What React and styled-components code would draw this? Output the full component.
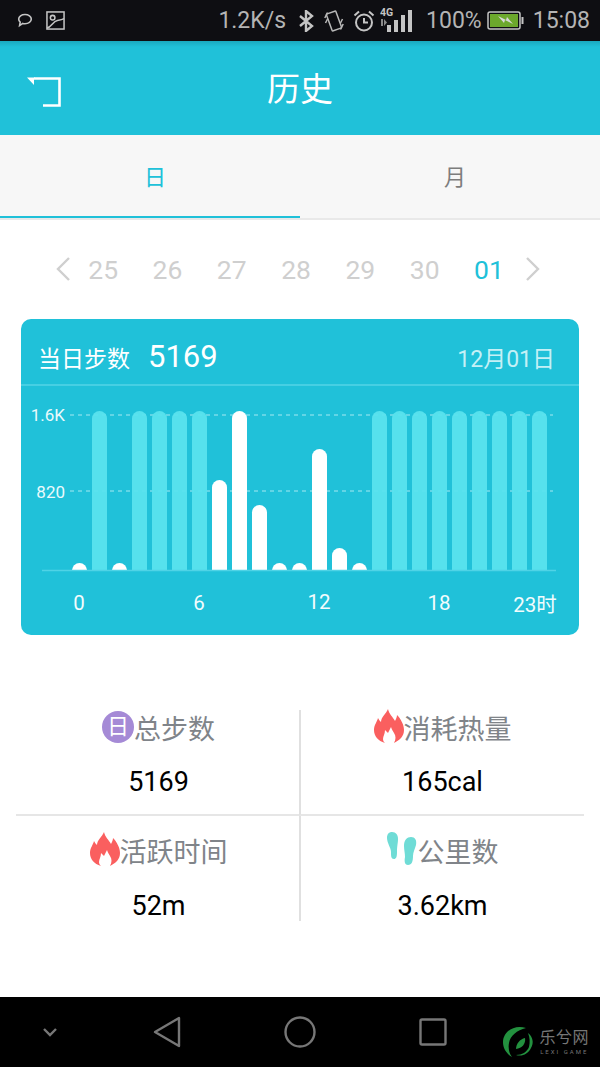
import React from 'react';
import styled, { createGlobalStyle } from 'styled-components';

const GlobalStyle = createGlobalStyle`
  html, body { margin: 0; padding: 0; background: #fff; }
  body { font-family: Roboto, "Noto Sans CJK SC", sans-serif; }
`;

const Page = styled.div`
  width: 600px;
  height: 1067px;
  display: flex;
  flex-direction: column;
  background: #fff;
  overflow: hidden;
  font-family: Roboto, "Noto Sans CJK SC", sans-serif;
`;

const StatusBar = styled.div`
  height: 41px;
  flex: none;
  background: #0e0e12;
  display: flex;
  align-items: center;
  justify-content: space-between;
  padding: 0 10px 0 17px;
  color: #b4b4b4;
  font-size: 23px;
`;

const StatusGroup = styled.div`
  display: flex;
  align-items: center;
  gap: ${p => p.$gap || 0}px;
`;

const StatusText = styled.span`
  margin-left: ${p => p.$left || 0}px;
  line-height: 41px;
`;

const StatusIcon = styled.svg`
  flex: none;
  margin-left: ${p => p.$left || 0}px;
  margin-top: ${p => p.$top || 0}px;
`;

const Header = styled.div`
  height: 94px;
  box-sizing: border-box;
  padding-top: 4px;
  flex: none;
  display: flex;
  align-items: center;
  justify-content: center;
  position: relative;
  background: linear-gradient(#1aa9bf 0, #20c1d9 6px);
`;

const BackButton = styled.svg`
  position: absolute;
  left: 26px;
  top: 35px;
`;

const Title = styled.div`
  font-size: 33px;
  color: #fff;
  line-height: 90px;
`;

const Tabs = styled.div`
  height: 83px;
  flex: none;
  display: flex;
  background: #f7f7f7;
  border-bottom: 2px solid #e9e9e9;
`;

const Tab = styled.div`
  flex: 1;
  display: flex;
  align-items: center;
  justify-content: center;
  padding: 0 0 4px 10px;
  font-size: 22px;
  color: ${p => (p.$active ? '#20c1d9' : '#7d7d7d')};
  box-shadow: ${p => (p.$active ? 'inset 0 -2px 0 #20c1d9' : 'none')};
`;

const DateRow = styled.div`
  height: 99px;
  flex: none;
  display: flex;
  align-items: center;
  padding-left: 55px;
`;

const Chevron = styled.svg`
  flex: none;
  margin-left: ${p => p.$left || 0}px;
  margin-top: -2px;
`;

const DateCell = styled.div`
  width: 64.3px;
  text-align: center;
  font-size: 26.5px;
  color: ${p => (p.$active ? '#20c1d9' : '#cfcfcf')};
`;

const Card = styled.div`
  margin: 0 21px;
  height: 316px;
  flex: none;
  border-radius: 10px;
  background: #20c1d9;
  overflow: hidden;
`;

const CardHeader = styled.div`
  height: 67px;
  box-sizing: border-box;
  border-bottom: 2px solid #46cfe3;
  display: flex;
  align-items: center;
  padding: 0 24px 0 17px;
  color: #fff;
`;

const CardLabel = styled.span`
  font-size: 23px;
  margin-top: 10px;
`;

const CardTotal = styled.span`
  font-size: 31px;
  margin-left: 18px;
  margin-top: 9px;
`;

const CardDate = styled.span`
  margin-left: auto;
  margin-top: 10px;
  font-size: 23px;
  color: #c4f0f6;
`;

const Plot = styled.svg`
  display: block;
`;

const Stats = styled.div`
  margin: 75px 16px 0;
  display: grid;
  grid-template-columns: 283px 285px;
  grid-template-rows: 106px 105px;
`;

const StatCell = styled.div`
  display: flex;
  flex-direction: column;
  align-items: center;
  box-sizing: border-box;
  padding-left: ${p => (p.$right ? 0 : 2)}px;
  border-left: ${p => (p.$right ? '2px solid #e0e0e0' : 'none')};
  border-bottom: ${p => (p.$top ? '2px solid #e6e6e6' : 'none')};
`;

const StatTitle = styled.div`
  display: flex;
  align-items: center;
  height: ${p => (p.$top ? 34 : 40)}px;
  margin-top: ${p => (p.$top ? 0 : 15)}px;
  font-size: 27px;
  color: #808489;
`;

const StatValue = styled.div`
  font-size: 27px;
  color: #000;
  margin-top: ${p => (p.$top ? 21 : 19)}px;
  line-height: 34px;
`;

const DayBadge = styled.span`
  width: 32px;
  height: 32px;
  flex: none;
  border-radius: 50%;
  background: #a58ad6;
  color: #fff;
  font-size: 22px;
  line-height: 32px;
  text-align: center;
`;

const TitleIcon = styled.svg`
  flex: none;
  margin-top: -3px;
`;

const NavBar = styled.div`
  margin-top: auto;
  height: 70px;
  flex: none;
  background: #000;
  position: relative;
  display: flex;
  align-items: center;
  padding-left: 42px;
`;

const NavIcon = styled.svg`
  flex: none;
  margin-left: ${p => p.$left}px;
`;

const Watermark = styled.div`
  position: absolute;
  right: 11px;
  bottom: 9px;
  display: flex;
  align-items: center;
  gap: 5px;
`;

const WatermarkText = styled.div`
  display: flex;
  flex-direction: column;
  align-items: center;
  color: #767676;
`;

const WatermarkName = styled.span`
  font-size: 16px;
  line-height: 20px;
  letter-spacing: 0.5px;
`;

const WatermarkSub = styled.span`
  font-size: 6px;
  line-height: 8px;
  letter-spacing: 2px;
`;

const Flame = () => (
  <TitleIcon width="30" height="34" viewBox="0 0 30 34">
    <path
      fill="#fa5f5f"
      d="M14 0C15 5 19 8 21 12C22 10 23 8 23 6C27 10 30 16 30 21C30 27 26 31 20 34C22 30 22 27 20 24C19 22 18 21 17 18C16 20 15 22 14 24C13 23 12 22 11 21C11 25 9 27 9 30C9 32 10 33 11 34C4 32 0 27 0 21C0 16 3 13 4 9C5 11 6 12 7 13C7 8 12 5 14 0Z"
    />
  </TitleIcon>
);

const Feet = () => (
  <TitleIcon width="31" height="34" viewBox="0 0 31 34">
    <path fill="#6fdcd6" d="M5 0C9 0 11 3 11 7C11 11 10 14 10 20C10 25 9 27 7 27C4 27 4 24 4 20C4 16 0 11 0 6C0 2 2 0 5 0Z" />
    <path fill="#6fdcd6" d="M24 5C28 5 30 8 29 13C28 17 26 20 26 24C26 29 25 33 21 33C18 33 17 30 18 25C18 21 17 18 17 14C17 8 20 5 24 5Z" />
  </TitleIcon>
);

const hours = [
  { top: 563 }, { top: 411, full: true }, { top: 563 }, { top: 411, full: true },
  { top: 411, full: true }, { top: 411, full: true }, { top: 411, full: true }, { top: 480 },
  { top: 411 }, { top: 505 }, { top: 563 }, { top: 563 },
  { top: 449 }, { top: 548 }, { top: 563 }, { top: 411, full: true },
  { top: 411, full: true }, { top: 411, full: true }, { top: 411, full: true }, { top: 411, full: true },
  { top: 411, full: true }, { top: 411, full: true }, { top: 411, full: true }, { top: 411, full: true },
];

// plot coordinates start at the card's left edge and just under its header
const PLOT_X = 21;
const PLOT_Y = 386;
const px = x => x - PLOT_X;
const py = y => y - PLOT_Y;

const Chart = () => (
  <Plot width="558" height="249" viewBox="0 0 558 249">
    <defs>
      <clipPath id="plotClip">
        <rect x="0" y="0" width="558" height={py(570)} />
      </clipPath>
    </defs>
    <g stroke="#a5e9f2" strokeWidth="1" strokeDasharray="4 4">
      <line x1={px(70)} x2={px(553)} y1={py(415)} y2={py(415)} />
      <line x1={px(70)} x2={px(553)} y1={py(491)} y2={py(491)} />
    </g>
    <g clipPath="url(#plotClip)">
      {hours.map((h, i) => (
        <rect
          key={i}
          x={px(72 + i * 20)}
          y={py(h.top)}
          width="15"
          height={570 - h.top + 20}
          rx="7.5"
          fill={h.full ? '#5ae3ee' : '#fff'}
          fillOpacity={h.full ? 0.95 : 1}
        />
      ))}
    </g>
    <line x1={px(42)} x2={px(556)} y1={py(570.5)} y2={py(570.5)} stroke="#4fd3e6" strokeWidth="1.5" />
    <g fill="#eafafc" fontSize="17" fontFamily="Roboto, sans-serif" textAnchor="end">
      <text x={px(65)} y={py(421)}>1.6K</text>
      <text x={px(65)} y={py(498)}>820</text>
    </g>
    <g fill="#f2fcfd" fontSize="20.5" fontFamily="Roboto, 'Noto Sans CJK SC', sans-serif" textAnchor="middle">
      <text x={px(79)} y={py(610)}>0</text>
      <text x={px(199)} y={py(610)}>6</text>
      <text x={px(319)} y={py(609)}>12</text>
      <text x={px(439)} y={py(610)}>18</text>
      <text x={px(535)} y={py(612)}>23时</text>
    </g>
  </Plot>
);

const StatusLeft = () => (
  <StatusGroup $gap={13}>
    <svg width="16" height="15" viewBox="0 0 16 15" fill="none" stroke="#c4c4c4" strokeWidth="1.6">
      <path d="M8 1.5c3.5 0 6.3 2 6.3 4.6S11.5 10.700 8 10.700c-.8 0-1.500-.1-2.200-.3L2.600 12.600l.6-3.500C2 8.300 1.700 7.200 1.700 6.100 1.700 3.500 4.500 1.500 8 1.500z" />
    </svg>
    <svg width="19" height="19" viewBox="0 0 20 20" fill="none" stroke="#c4c4c4" strokeWidth="1.6">
      <rect x="1" y="1" width="18" height="18" />
      <circle cx="7" cy="7" r="2.400" />
      <path d="M1 18C6 17 7 11 12 10c3-.6 5-1 7-2" />
    </svg>
  </StatusGroup>
);

const StatusRight = () => (
  <StatusGroup>
    <StatusText>1.2K/s</StatusText>
    <StatusIcon $left={12} width="16" height="22" viewBox="0 0 16 22" fill="none" stroke="#c4c4c4" strokeWidth="2.400">
      <path d="M2 6l12 10-6 5V1l6 5L2 16" />
    </StatusIcon>
    <StatusIcon $left={10} width="20" height="22" viewBox="0 0 20 22" fill="none" stroke="#b8b8b8" strokeWidth="1.500">
      <rect x="5" y="2" width="10" height="18" rx="1" transform="rotate(-20 10 11)" />
      <path d="M0.800 8L3.500 2.500M1.500 13L3.500 9M19.200 14L16.500 19.500M18.500 9L16.500 13" />
    </StatusIcon>
    <StatusIcon $left={9} width="22" height="22" viewBox="0 0 22 22" fill="none" stroke="#c4c4c4" strokeWidth="2">
      <circle cx="11" cy="12.500" r="8" />
      <path d="M11 8V12.500h4M1.500 5.500L6 1.500M20.500 5.500L16 1.500" />
    </StatusIcon>
    <StatusIcon $left={5} $top={-2} width="33" height="25" viewBox="0 0 33 25">
      <text x="0" y="9" fontSize="10.500" fontWeight="700" fill="#c4c4c4" fontFamily="Roboto, sans-serif">4G</text>
      <path d="M1 12h2v7H1zM4 12l3 3.500L4 19z" fill="#8a8a8a" />
      <rect x="7" y="18" width="4" height="7" fill="#c4c4c4" />
      <rect x="14" y="13" width="4" height="12" fill="#c4c4c4" />
      <rect x="21" y="8" width="4" height="17" fill="#c4c4c4" />
      <rect x="28" y="3" width="4" height="22" fill="#c4c4c4" />
    </StatusIcon>
    <StatusText $left={13}>100%</StatusText>
    <StatusIcon $left={5} width="37" height="19" viewBox="0 0 37 19">
      <rect x="1" y="1" width="32" height="17" rx="2" fill="none" stroke="#c4c4c4" strokeWidth="1.500" />
      <rect x="3" y="3" width="28" height="13" fill="#6ca82c" />
      <rect x="34.500" y="6" width="2" height="7" fill="#c4c4c4" />
      <path d="M11 5l8 4 1-3 6 7-8-4-1 3z" fill="#d8d8d8" />
    </StatusIcon>
    <StatusText $left={9}>15:08</StatusText>
  </StatusGroup>
);

export default function App() {
  const days = ['25', '26', '27', '28', '29', '30', '01'];
  return (
    <Page>
      <GlobalStyle />
      <StatusBar>
        <StatusLeft />
        <StatusRight />
      </StatusBar>

      <Header>
        <BackButton width="36" height="32" viewBox="0 0 36 32">
          <path d="M1 1.500h8l-1 1.500v6z" fill="#fff" />
          <path d="M8 2.500h25.500v27H17" fill="none" stroke="#fff" strokeWidth="2.600" />
        </BackButton>
        <Title>历史</Title>
      </Header>

      <Tabs>
        <Tab $active>日</Tab>
        <Tab>月</Tab>
      </Tabs>

      <DateRow>
        <Chevron width="16" height="26" viewBox="0 0 16 26" fill="none" stroke="#cfcfcf" strokeWidth="2.400">
          <path d="M14 2L3 13l11 11" />
        </Chevron>
        {days.map((d, i) => (
          <DateCell key={d} $active={i === days.length - 1}>{d}</DateCell>
        ))}
        <Chevron $left={4} width="16" height="26" viewBox="0 0 16 26" fill="none" stroke="#cfcfcf" strokeWidth="2.400">
          <path d="M2 2l11 11L2 24" />
        </Chevron>
      </DateRow>

      <Card>
        <CardHeader>
          <CardLabel>当日步数</CardLabel>
          <CardTotal>5169</CardTotal>
          <CardDate>12月01日</CardDate>
        </CardHeader>
        <Chart />
      </Card>

      <Stats>
        <StatCell $top>
          <StatTitle $top><DayBadge>日</DayBadge>总步数</StatTitle>
          <StatValue $top>5169</StatValue>
        </StatCell>
        <StatCell $top $right>
          <StatTitle $top><Flame />消耗热量</StatTitle>
          <StatValue $top>165cal</StatValue>
        </StatCell>
        <StatCell>
          <StatTitle><Flame />活跃时间</StatTitle>
          <StatValue>52m</StatValue>
        </StatCell>
        <StatCell $right>
          <StatTitle><Feet />公里数</StatTitle>
          <StatValue>3.62km</StatValue>
        </StatCell>
      </Stats>

      <NavBar>
        <NavIcon $left={0} width="16" height="10" viewBox="0 0 16 10" fill="none" stroke="#777" strokeWidth="2.400">
          <path d="M2 2l6 6 6-6" />
        </NavIcon>
        <NavIcon $left={95} width="28" height="32" viewBox="0 0 28 32" fill="none" stroke="#777" strokeWidth="2.400" strokeLinejoin="round">
          <path d="M2 16L26 2v28z" />
        </NavIcon>
        <NavIcon $left={103} width="32" height="32" viewBox="0 0 32 32" fill="none" stroke="#777" strokeWidth="2.400">
          <circle cx="16" cy="16" r="14.500" />
        </NavIcon>
        <NavIcon $left={103} width="28" height="28" viewBox="0 0 28 28" fill="none" stroke="#777" strokeWidth="2.400">
          <rect x="1.500" y="1.500" width="25" height="25" rx="1.500" />
        </NavIcon>
        <Watermark>
          <svg width="32" height="33" viewBox="0 0 32 33">
            <path d="M24 3C12 -1 1 7 1 17c0 7 4 12 9 15-3-4-4-9-3-14C8 11 15 5 24 3z" fill="#23913f" />
            <path d="M26 8c5 4 6 10 3 15-3 6-9 9-15 7 6 0 11-3 13-8 1-5 1-9-1-14z" fill="#23913f" />
            <path d="M23 13c1 6-3 10-9 11 0-5 4-10 9-11z" fill="#23913f" />
          </svg>
          <WatermarkText>
            <WatermarkName>乐兮网</WatermarkName>
            <WatermarkSub>LEXI GAME</WatermarkSub>
          </WatermarkText>
        </Watermark>
      </NavBar>
    </Page>
  );
}
